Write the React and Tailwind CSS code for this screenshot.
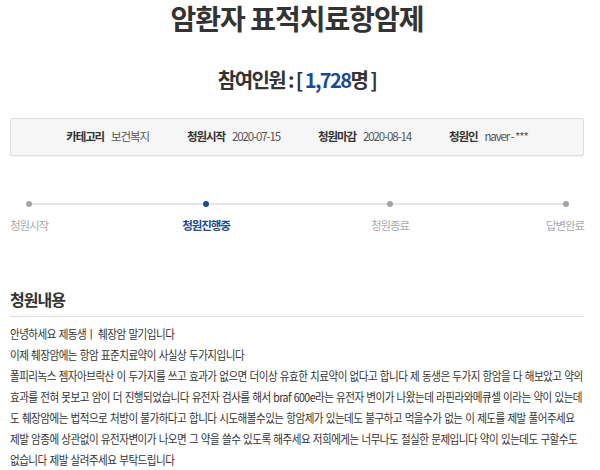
import React from "react";

const font = { fontFamily: '"Noto Sans CJK KR", "Liberation Sans", sans-serif' };

const info = [
  { label: "카테고리", value: "보건복지" },
  { label: "청원시작", value: "2020-07-15" },
  { label: "청원마감", value: "2020-08-14" },
  { label: "청원인", value: "naver - ***" },
];

const lines = [
  "안녕하세요 제동생ㅣ 췌장암 말기입니다",
  "이제 췌장암에는 항암 표준치료약이 사실상 두가지입니다",
  "폴피리녹스 젬자아브락산 이 두가지를 쓰고 효과가 없으면 더이상 유효한 치료약이 없다고 합니다 제 동생은 두가지 항암을 다 해보았고 약의",
  "효과를 전혀 못보고 암이 더 진행되었습니다 유전자 검사를 해서 braf 600e라는 유전자 변이가 나왔는데 라핀라와메큐셀 이라는 약이 있는데",
  "도 췌장암에는 법적으로 처방이 불가하다고 합니다 시도해볼수있는 항암제가 있는데도 불구하고 먹을수가 없는 이 제도를 제발 풀어주세요",
  "제발 암종에 상관없이 유전자변이가 나오면 그 약을 쓸수 있도록 해주세요 저희에게는 너무나도 절실한 문제입니다 약이 있는데도 구할수도",
  "없습니다 제발 살려주세요 부탁드립니다",
];

const App = () => {
  return (
    <div className="w-[600px] h-[470px] overflow-hidden bg-white text-[#333]" style={font}>
      <div className="pl-[10px] pr-[16px]">
        <h1 className="pt-[1px] text-center text-[28px] font-bold leading-[34px] tracking-[-1px] text-[#333]">
          암환자 표적치료항암제
        </h1>

        <div className="mt-[32px] text-center text-[20px] font-bold leading-[26px] tracking-[-1.6px] text-[#333]">
          참여인원 : [ <span className="text-[#1d4a8e]">1,728</span>명 ]
        </div>

        <div className="mt-[25px] h-[38px] flex items-center justify-center gap-[38px] rounded-[2px] border border-[#dddddd] bg-[#f6f6f6] text-[11.5px] tracking-[-1.1px] shadow-[0_1px_1px_rgba(0,0,0,0.05)]">
          {info.map((it) => (
            <div key={it.label} className="flex items-center gap-[7px]">
              <span className="font-bold text-[#333]">{it.label}</span>
              <span className="text-[#555]">{it.value}</span>
            </div>
          ))}
        </div>

        <div className="mt-[43px] relative">
          <div className="absolute left-[19px] right-[18px] top-[4px] h-[2px] bg-[#e6e6e6]" />
          <div className="relative grid grid-cols-[98px_196px_172px_1fr] h-[10px] items-center">
            <div className="ml-[16px] w-[6px] h-[6px] rounded-full bg-[#a4a4a4]" />
            <div className="mx-auto w-[6px] h-[6px] rounded-full bg-[#1d4a8e]" />
            <div className="mx-auto w-[6px] h-[6px] rounded-full bg-[#a4a4a4]" />
            <div className="ml-auto mr-[15px] w-[6px] h-[6px] rounded-full bg-[#a4a4a4]" />
          </div>
          <div className="mt-[7px] grid grid-cols-[98px_196px_172px_1fr] text-[11.5px] leading-[18px] tracking-[-1.1px]">
            <span className="text-[#aaa]">청원시작</span>
            <span className="text-center font-bold text-[#1d4a8e]">청원진행중</span>
            <span className="text-center text-[#aaa]">청원종료</span>
            <span className="text-right text-[#aaa]">답변완료</span>
          </div>
        </div>

        <h2 className="mt-[53px] text-[16px] font-bold leading-[24px] tracking-[-1px] text-[#333]">
          청원내용
        </h2>
        <div className="mt-[5px] h-px bg-[#e1e1e1]" />

        <div className="mt-[6px] text-[12px] leading-[21px] tracking-[-0.6px] [word-spacing:1px] text-[#333] origin-left scale-x-[0.88]">
          {lines.map((l, i) => (
            <div key={i} className="whitespace-nowrap">
              {l}
            </div>
          ))}
        </div>
      </div>
    </div>
  );
};

export default App;
